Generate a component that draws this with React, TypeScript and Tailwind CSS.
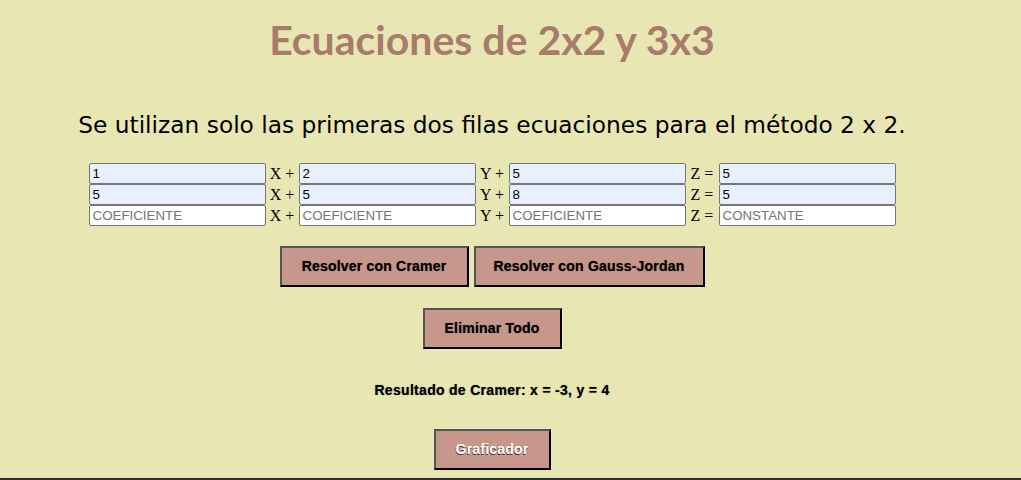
import React from 'react'

const rows = [
    ['1', '2', '5', '5'],
    ['5', '5', '8', '5'],
    ['', '', '', ''],
]

const Field = (props: { value: string, placeholder: string }) => {
    return (
        <input
            readOnly
            value={props.value}
            placeholder={props.placeholder}
            className={`${props.value ? 'bg-[#e8f0fe]' : 'bg-white'} w-[177px] h-[21px] border border-[#767676] rounded-[2px] px-[3px] text-[13.33px] text-black placeholder:text-[#757575] outline-none`}
            style={{ fontFamily: '"Liberation Sans", Arial, sans-serif' }}
        />
    )
}

const Label = (props: { text: string }) => (
    <span className="w-[33px] text-center text-[16px] text-black font-['Liberation_Serif',serif] leading-[20px]">{props.text}</span>
)

const Btn = (props: { children: React.ReactNode, className?: string }) => (
    <button
        type="button"
        className={`h-[41px] bg-[#c8978c] border-2 border-t-[#555] border-l-[#555] border-r-black border-b-black text-[14px] tracking-[0.2px] font-bold font-['Liberation_Sans',Arial,sans-serif] ${props.className ?? ''}`}
    >
        {props.children}
    </button>
)

export default function App() {
    return (
        <div className="min-h-[480px] bg-[#e8e7b4] flex flex-col">
            <div className="w-[984px] flex flex-col items-center">
                <h1 className="mt-[14px] text-[41px] leading-[52px] font-bold text-[#a97b6b] font-['Lato',sans-serif]">
                    Ecuaciones de 2x2 y 3x3
                </h1>

                <p className="mt-[44px] text-[23.3px] leading-[30px] text-black font-['DejaVu_Sans',sans-serif]">
                    Se utilizan solo las primeras dos filas ecuaciones para el método 2 x 2.
                </p>

                <div className="mt-[23px] flex flex-col">
                    {rows.map((r, i) => (
                        <div key={i} className="flex items-center">
                            <Field value={r[0]} placeholder="COEFICIENTE" />
                            <Label text="X +" />
                            <Field value={r[1]} placeholder="COEFICIENTE" />
                            <Label text="Y +" />
                            <Field value={r[2]} placeholder="COEFICIENTE" />
                            <Label text="Z =" />
                            <Field value={r[3]} placeholder="CONSTANTE" />
                        </div>
                    ))}
                </div>

                <div className="mt-[20px] flex gap-[5px]">
                    <Btn className="w-[189px] text-black [text-shadow:0_0_1px_rgba(0,0,0,0.6)]">Resolver con Cramer</Btn>
                    <Btn className="w-[231px] text-black [text-shadow:0_0_1px_rgba(0,0,0,0.6)]">Resolver con Gauss-Jordan</Btn>
                </div>

                <Btn className="mt-[21px] w-[139px] text-black [text-shadow:0_0_1px_rgba(0,0,0,0.6)]">Eliminar Todo</Btn>

                <p className="mt-[33px] text-[14px] tracking-[0.3px] font-bold text-black font-['Liberation_Sans',Arial,sans-serif] leading-[16px] [text-shadow:0_0_1px_rgba(0,0,0,0.6)]">
                    Resultado de Cramer: x = -3, y = 4
                </p>

                <Btn className="mt-[31px] w-[117px] text-white [text-shadow:-0.5px_0.5px_0.5px_rgba(0,0,0,0.7)]">Graficador</Btn>
            </div>
            <div className="mt-auto h-[2px] bg-[#2b2e33]" />
        </div>
    )
}
